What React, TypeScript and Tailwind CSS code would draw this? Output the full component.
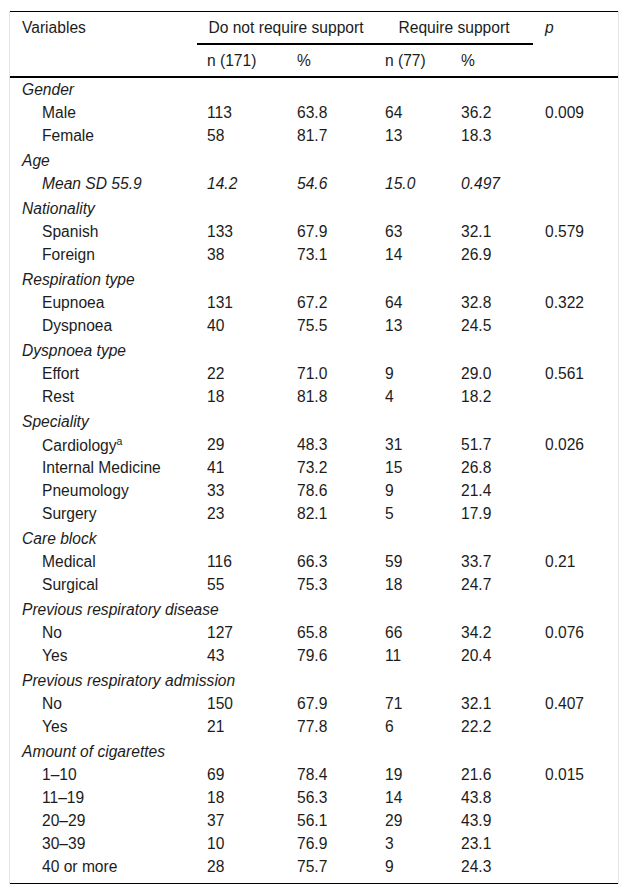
type Row = {
  label: React.ReactNode;
  cells: string[];
  p?: string;
  italic?: boolean;
};

type Group = {
  title: string;
  rows: Row[];
};

const groups: Group[] = [
  {
    title: "Gender",
    rows: [
      { label: "Male", cells: ["113", "63.8", "64", "36.2"], p: "0.009" },
      { label: "Female", cells: ["58", "81.7", "13", "18.3"] },
    ],
  },
  {
    title: "Age",
    rows: [{ label: "Mean SD 55.9", cells: ["14.2", "54.6", "15.0", "0.497"], italic: true }],
  },
  {
    title: "Nationality",
    rows: [
      { label: "Spanish", cells: ["133", "67.9", "63", "32.1"], p: "0.579" },
      { label: "Foreign", cells: ["38", "73.1", "14", "26.9"] },
    ],
  },
  {
    title: "Respiration type",
    rows: [
      { label: "Eupnoea", cells: ["131", "67.2", "64", "32.8"], p: "0.322" },
      { label: "Dyspnoea", cells: ["40", "75.5", "13", "24.5"] },
    ],
  },
  {
    title: "Dyspnoea type",
    rows: [
      { label: "Effort", cells: ["22", "71.0", "9", "29.0"], p: "0.561" },
      { label: "Rest", cells: ["18", "81.8", "4", "18.2"] },
    ],
  },
  {
    title: "Speciality",
    rows: [
      {
        label: (
          <>
            Cardiology<span className="text-[10.5px] align-[6px]">a</span>
          </>
        ),
        cells: ["29", "48.3", "31", "51.7"],
        p: "0.026",
      },
      { label: "Internal Medicine", cells: ["41", "73.2", "15", "26.8"] },
      { label: "Pneumology", cells: ["33", "78.6", "9", "21.4"] },
      { label: "Surgery", cells: ["23", "82.1", "5", "17.9"] },
    ],
  },
  {
    title: "Care block",
    rows: [
      { label: "Medical", cells: ["116", "66.3", "59", "33.7"], p: "0.21" },
      { label: "Surgical", cells: ["55", "75.3", "18", "24.7"] },
    ],
  },
  {
    title: "Previous respiratory disease",
    rows: [
      { label: "No", cells: ["127", "65.8", "66", "34.2"], p: "0.076" },
      { label: "Yes", cells: ["43", "79.6", "11", "20.4"] },
    ],
  },
  {
    title: "Previous respiratory admission",
    rows: [
      { label: "No", cells: ["150", "67.9", "71", "32.1"], p: "0.407" },
      { label: "Yes", cells: ["21", "77.8", "6", "22.2"] },
    ],
  },
  {
    title: "Amount of cigarettes",
    rows: [
      { label: "1–10", cells: ["69", "78.4", "19", "21.6"], p: "0.015" },
      { label: "11–19", cells: ["18", "56.3", "14", "43.8"] },
      { label: "20–29", cells: ["37", "56.1", "29", "43.9"] },
      { label: "30–39", cells: ["10", "76.9", "3", "23.1"] },
      { label: "40 or more", cells: ["28", "75.7", "9", "24.3"] },
    ],
  },
];

const cols = "grid grid-cols-[187px_90px_88px_76px_82px_1fr]";

export default function App() {
  return (
    <div className="bg-white min-h-[895px] pt-[11px] pl-[9px] font-['Liberation_Sans',Arial,sans-serif] text-[15.6px] text-[#1c1c1c] leading-none">
      <div className="w-[610px] border-x border-[#e4e4e4]">
        {/* header */}
        <div className={`${cols} grid-rows-[33px_33px] border-t border-black`}>
          <div className="pl-[12px] pt-[8px]">Variables</div>
          <div className="col-span-2 border-b-2 border-black flex justify-center pt-[8px]">
            Do not require support
          </div>
          <div className="col-span-2 border-b-2 border-black flex justify-center pt-[8px]">
            Require support
          </div>
          <div className="pl-[12px] pt-[8px] italic">p</div>
          <div className="border-b-2 border-black" />
          <div className="pl-[10px] pt-[8px] border-b-2 border-black">n (171)</div>
          <div className="pl-[10px] pt-[8px] border-b-2 border-black">%</div>
          <div className="pl-[10px] pt-[8px] border-b-2 border-black">n (77)</div>
          <div className="pl-[10px] pt-[8px] border-b-2 border-black">%</div>
          <div className="border-b-2 border-black" />
        </div>

        {/* body */}
        <div className="flex flex-col gap-[2px] pb-[5px] border-b border-black">
          {groups.map((g) => (
            <div key={g.title} className="flex flex-col">
              <div className="h-[23px] flex items-center pl-[12px] italic">{g.title}</div>
              {g.rows.map((r, i) => (
                <div key={i} className={`${cols} h-[23px] items-center ${r.italic ? "italic" : ""}`}>
                  <div className="pl-[32px]">{r.label}</div>
                  {r.cells.map((c, j) => (
                    <div key={j} className="pl-[10px]">
                      {c}
                    </div>
                  ))}
                  <div className="pl-[12px]">{r.p ?? ""}</div>
                </div>
              ))}
            </div>
          ))}
        </div>
      </div>
    </div>
  );
}
